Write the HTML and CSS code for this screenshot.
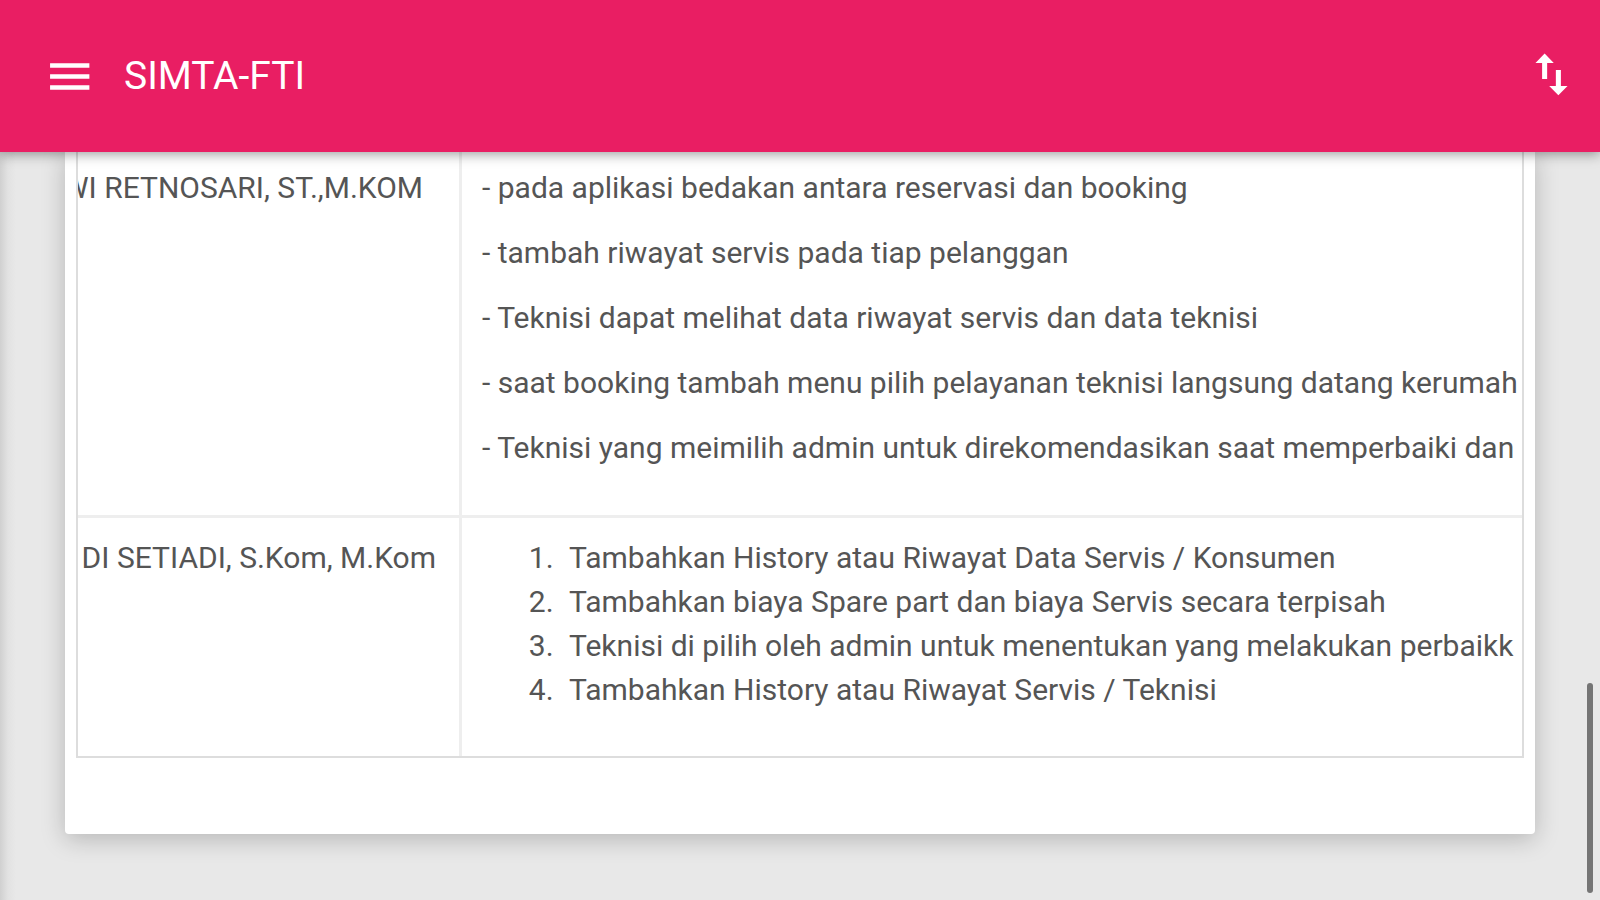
FILE: index.html
```html
<!DOCTYPE html>
<html lang="id">
<head>
<meta charset="utf-8">
<meta name="viewport" content="width=device-width, initial-scale=1">
<title>SIMTA-FTI</title>
<link rel="stylesheet" href="styles.css">
</head>
<body>
<header class="appbar">
  <button class="icon-button" type="button" aria-label="Menu">
    <svg class="icon icon-menu" viewBox="0 0 24 24" aria-hidden="true"><path d="M3.200 18H21v-2H3.200v2zm0-5H21v-2H3.200v2zm0-7v2H21V6H3.200z"/></svg>
  </button>
  <h1 class="title">SIMTA-FTI</h1>
  <button class="icon-button" type="button" aria-label="Import / export">
    <svg class="icon icon-swap" viewBox="0 0 24 24" aria-hidden="true"><path d="M9 2.800L5 7h2.900V14h2.200V7H13L9 2.800zm7.100 14.200V10h-2.200v7H11l4 4.100 4-4.100h-2.900z"/></svg>
  </button>
</header>
<main class="page">
  <section class="card">
    <div class="table-scroll">
      <table class="notes">
        <tbody>
          <tr>
            <td class="name name-inset">WI RETNOSARI, ST.,M.KOM</td>
            <td class="remarks">
              <p>- pada aplikasi bedakan antara reservasi dan booking</p>
              <p>- tambah riwayat servis pada tiap pelanggan</p>
              <p>- Teknisi dapat melihat data riwayat servis dan data teknisi</p>
              <p>- saat booking tambah menu pilih pelayanan teknisi langsung datang kerumah</p>
              <p>- Teknisi yang meimilih admin untuk direkomendasikan saat memperbaiki dan</p>
            </td>
          </tr>
          <tr>
            <td class="name">DI SETIADI, S.Kom, M.Kom</td>
            <td class="remarks">
              <ol>
                <li>Tambahkan History atau Riwayat Data Servis / Konsumen</li>
                <li>Tambahkan biaya Spare part dan biaya Servis secara terpisah</li>
                <li>Teknisi di pilih oleh admin untuk menentukan yang melakukan perbaikk</li>
                <li>Tambahkan History atau Riwayat Servis / Teknisi</li>
              </ol>
            </td>
          </tr>
        </tbody>
      </table>
    </div>
  </section>
</main>
<div class="scroll-thumb"></div>
</body>
</html>
```
FILE: styles.css
```css
* { box-sizing: border-box; }

body {
  margin: 0;
  min-height: 100vh;
  overflow: hidden;
  display: flex;
  flex-direction: column;
  background: #e8e8e8;
  color: #555;
  font: 30px/44px Roboto, "Liberation Sans", sans-serif;
}

.appbar {
  position: relative;
  z-index: 1;
  display: flex;
  align-items: center;
  height: 152px;
  padding: 0 21px 0 43px;
  background: #e91e63;
  color: #fff;
  box-shadow: 0 2px 12px rgba(0, 0, 0, 0.4);
}

.icon-button {
  display: flex;
  padding: 0;
  border: 0;
  background: none;
  color: inherit;
}

.icon { fill: currentColor; }
.icon-menu { width: 53px; height: 53px; }
.icon-swap { width: 55px; height: 55px; margin-bottom: 4px; }

.title {
  flex: 1;
  margin: 0 0 0 28px;
  font-size: 39px;
  line-height: 46px;
  font-weight: 400;
}

.page {
  flex: 1;
  padding: 0 65px 66px;
  background: linear-gradient(to right, #d0d0d0, #e2e2e2 8px, #e8e8e8 16px);
}

.card {
  padding: 0 11px 76px;
  border-radius: 0 0 4px 4px;
  background: #fff;
  box-shadow: 0 5px 24px rgba(0, 0, 0, 0.22);
}

.table-scroll {
  overflow: hidden;
  border: 2px solid #ddd;
  border-top: 0;
}

.notes {
  width: calc(100% + 40px);
  margin-left: -40px;
  border-collapse: separate;
  border-spacing: 0;
  white-space: nowrap;
}

.notes td {
  padding: 18px 0 23px 20px;
  vertical-align: top;
}

.notes tr:first-child td {
  padding-top: 14px;
  padding-bottom: 24px;
  border-bottom: 3px solid #eee;
}

.notes .name {
  width: 424px;
  min-width: 424px;
  padding-left: 0;
  padding-right: 23px;
  border-right: 3px solid #eee;
  text-align: right;
}

.notes .name-inset { padding-right: 36px; }

.notes p { margin: 0 0 21px; }

.notes ol {
  margin: 0 0 21px;
  padding-left: 79px;
}

.notes li { padding-left: 8px; }

.scroll-thumb {
  position: fixed;
  z-index: 2;
  right: 7px;
  bottom: 7px;
  width: 6px;
  height: 210px;
  border-radius: 3px;
  background: #757575;
}
```
